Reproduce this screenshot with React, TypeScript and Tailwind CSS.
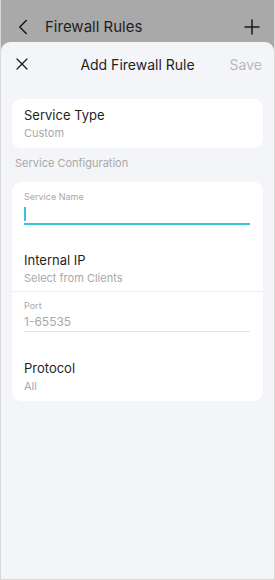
import { X, ChevronLeft, Plus } from "lucide-react";

export default function App() {
  return (
    <div
      className="w-[275px] h-[580px] flex flex-col bg-[#a9a9a9] border-x border-b border-[#d9d9d9] overflow-hidden"
      style={{ fontFamily: "Inter, Roboto, sans-serif" }}
    >
      {/* Background page (dimmed) */}
      <div className="h-[42px] pt-[12px] flex items-center pl-[9px] pr-[10px] shrink-0">
        <ChevronLeft className="w-[26px] h-[26px] text-[#1a1a1a]" strokeWidth={1.4} />
        <span className="ml-[9px] text-[15px] text-[#1f1f1f] flex-1">Firewall Rules</span>
        <Plus className="w-[24px] h-[24px] text-[#1a1a1a]" strokeWidth={1.5} />
      </div>

      {/* Sheet */}
      <div className="flex-1 bg-[#f4f5f9] rounded-t-[9px] flex flex-col">
        <div className="h-[44px] flex items-center px-[11px] relative">
          <X className="w-[20px] h-[20px] text-[#1a1a1a]" strokeWidth={1.5} />
          <span className="absolute left-0 right-0 text-center text-[14px] text-[#1f1f1f] pointer-events-none">
            Add Firewall Rule
          </span>
          <span className="ml-auto text-[14px] text-[#b9b9b9] mr-[1px]">Save</span>
        </div>

        <div className="px-[11px] pt-[13px]">
          <div className="bg-white rounded-[9px] px-[12px] pt-[7px] pb-[6px]">
            <div className="text-[13px] text-[#1f1f1f] leading-[18px]">Service Type</div>
            <div className="text-[11px] text-[#a8a8a8] leading-[18px]">Custom</div>
          </div>

          <div className="text-[11px] text-[#a8a8a8] px-[3px] pt-[8px] pb-[11px] leading-[15px]">
            Service Configuration
          </div>

          <div className="bg-white rounded-[9px] pb-[6px]">
            {/* Service Name */}
            <div className="pl-[12px] pr-[13px] pt-[9px]">
              <div className="text-[9px] text-[#a8a8a8] leading-[12px]">Service Name</div>
              <div className="h-[20px] mt-[2px] flex items-center border-b-[2px] border-[#35c6d9]">
                <div className="w-[2px] h-[14px] bg-[#35c6d9]" />
              </div>
            </div>

            {/* Internal IP */}
            <div className="pl-[12px] pt-[26px] pb-[4px] border-b border-[#f0f0f0]">
              <div className="text-[13px] text-[#1f1f1f] leading-[18px]">Internal IP</div>
              <div className="text-[11px] text-[#a8a8a8] leading-[18px]">Select from Clients</div>
            </div>

            {/* Port */}
            <div className="pl-[12px] pr-[13px] pt-[8px]">
              <div className="text-[9px] text-[#a8a8a8] leading-[12px]">Port</div>
              <div className="h-[20px] flex items-center border-b border-[#e3e3e3] text-[12px] text-[#a8a8a8]">
                1-65535
              </div>
            </div>

            {/* Protocol */}
            <div className="pl-[12px] pt-[27px]">
              <div className="text-[13px] text-[#1f1f1f] leading-[18px]">Protocol</div>
              <div className="text-[11px] text-[#a8a8a8] leading-[18px]">All</div>
            </div>
          </div>
        </div>
      </div>
    </div>
  );
}
